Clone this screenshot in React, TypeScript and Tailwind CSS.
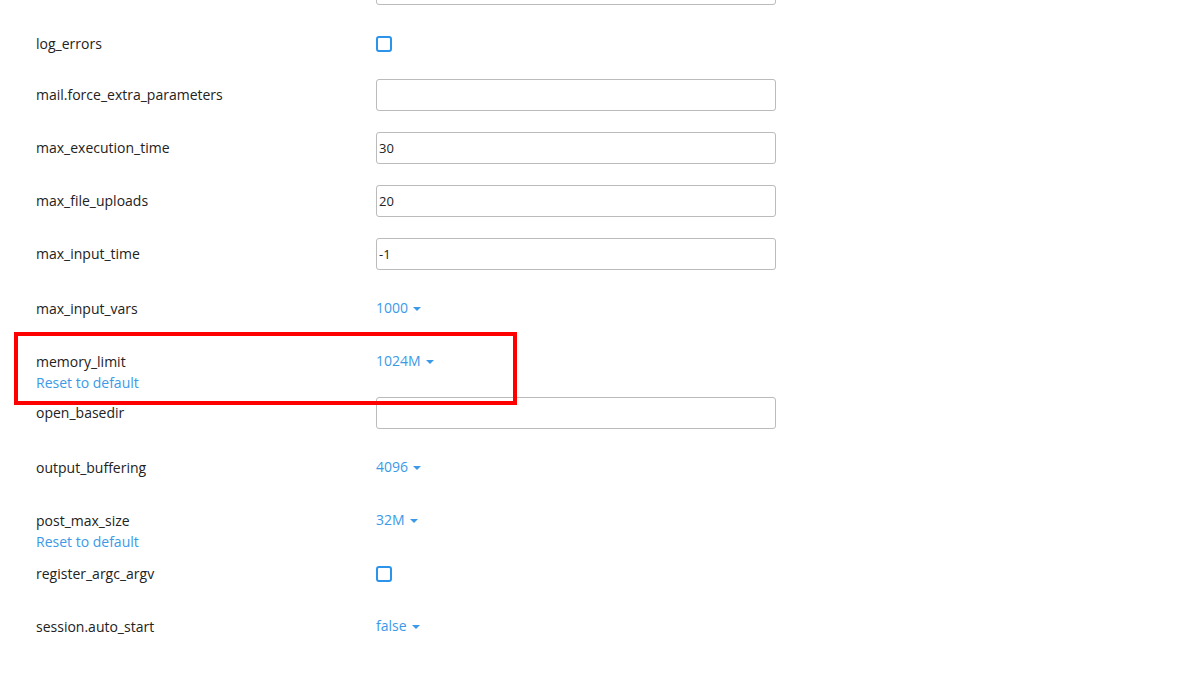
import React from 'react';

type Setting =
  | { name: string; kind: 'input'; value: string }
  | { name: string; kind: 'checkbox' }
  | { name: string; kind: 'select'; value: string; reset?: boolean };

const settings: Setting[] = [
  { name: '', kind: 'input', value: '' },
  { name: 'log_errors', kind: 'checkbox' },
  { name: 'mail.force_extra_parameters', kind: 'input', value: '' },
  { name: 'max_execution_time', kind: 'input', value: '30' },
  { name: 'max_file_uploads', kind: 'input', value: '20' },
  { name: 'max_input_time', kind: 'input', value: '-1' },
  { name: 'max_input_vars', kind: 'select', value: '1000' },
  { name: 'memory_limit', kind: 'select', value: '1024M', reset: true },
  { name: 'open_basedir', kind: 'input', value: '' },
  { name: 'output_buffering', kind: 'select', value: '4096' },
  { name: 'post_max_size', kind: 'select', value: '32M', reset: true },
  { name: 'register_argc_argv', kind: 'checkbox' },
  { name: 'session.auto_start', kind: 'select', value: 'false' },
];

function Caret() {
  return (
    <svg width="8" height="4" viewBox="0 0 8 4" className="ml-[5px] mt-[1px]">
      <path d="M0 0h8L4 4z" fill="#3b9ae8" />
    </svg>
  );
}

function Row({ s }: { s: Setting }) {
  const isInput = s.kind === 'input';
  return (
    <div className="flex h-[53px] items-start">
      <div className={`w-[376px] shrink-0 pl-[36px] ${isInput ? 'pt-[6px]' : 'pt-[8px]'}`}>
        <div className="leading-5 text-[#222]">{s.name}</div>
        {s.kind === 'select' && s.reset && (
          <div className="mt-[1px] leading-5 text-[#3b9ae8]">Reset to default</div>
        )}
      </div>
      {s.kind === 'input' && (
        <input
          readOnly
          value={s.value}
          className="h-[32px] w-[400px] rounded-[3px] border border-[#bbbbbb] bg-white px-[2px] text-[13px] text-[#222] outline-none"
        />
      )}
      {s.kind === 'checkbox' && (
        <div className="pt-[10px]">
          <div className="h-[16px] w-[16px] rounded-[3px] border-2 border-[#2b93ea] bg-white" />
        </div>
      )}
      {s.kind === 'select' && (
        <div className="flex items-center pt-[7px] text-[#3b9ae8]">
          <span className="leading-5">{s.value}</span>
          <Caret />
        </div>
      )}
    </div>
  );
}

export default function App() {
  return (
    <div
      className="relative h-[674px] w-[1200px] overflow-hidden bg-white text-[14px]"
      style={{ fontFamily: '"Open Sans", "Liberation Sans", sans-serif' }}
    >
      <div className="mt-[-27px]">
        {settings.map((s, i) => (
          <Row key={i} s={s} />
        ))}
      </div>
      <div className="absolute left-[14px] top-[332px] h-[73px] w-[503px] border-4 border-[#ff0000]" />
    </div>
  );
}
